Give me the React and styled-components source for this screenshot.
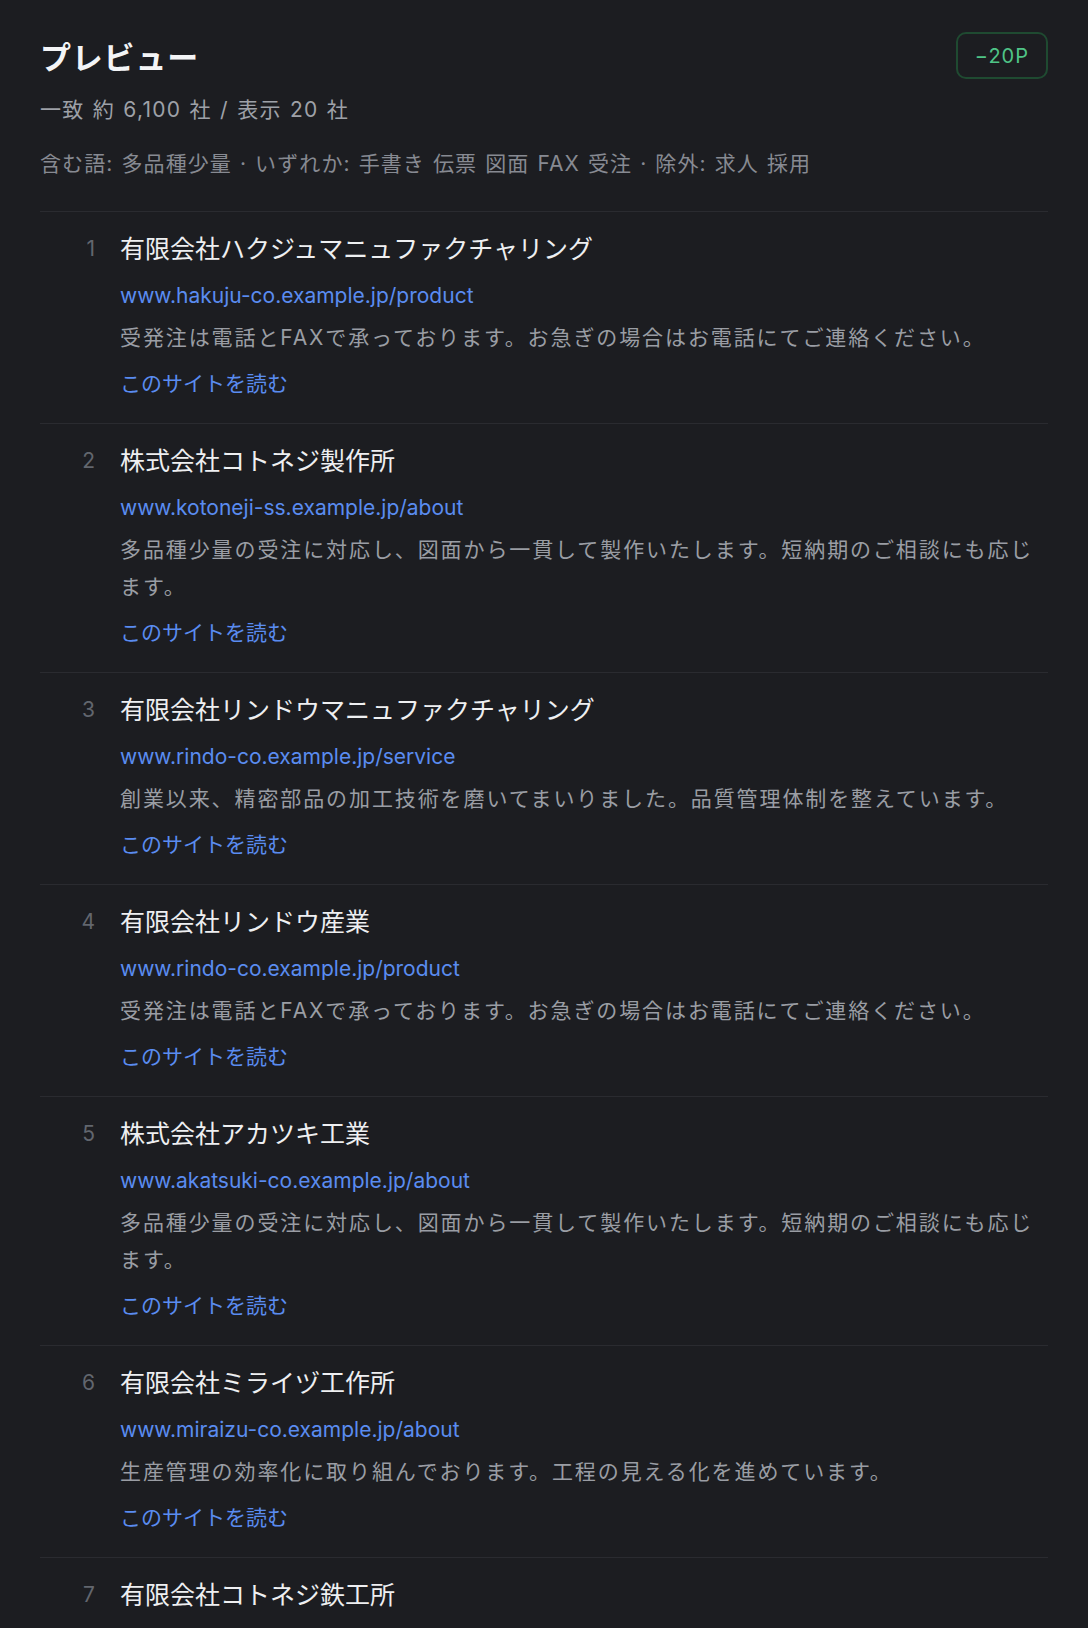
import React from "react"
import styled, { createGlobalStyle } from "styled-components"

const GlobalStyle = createGlobalStyle`
  html, body {
    margin: 0;
    padding: 0;
    background: #1c1d21;
  }
  * {
    box-sizing: border-box;
  }
`

const results = [
    {
        name: "有限会社ハクジュマニュファクチャリング",
        url: "www.hakuju-co.example.jp/product",
        text: "受発注は電話とFAXで承っております。お急ぎの場合はお電話にてご連絡ください。",
    },
    {
        name: "株式会社コトネジ製作所",
        url: "www.kotoneji-ss.example.jp/about",
        text: "多品種少量の受注に対応し、図面から一貫して製作いたします。短納期のご相談にも応じます。",
    },
    {
        name: "有限会社リンドウマニュファクチャリング",
        url: "www.rindo-co.example.jp/service",
        text: "創業以来、精密部品の加工技術を磨いてまいりました。品質管理体制を整えています。",
    },
    {
        name: "有限会社リンドウ産業",
        url: "www.rindo-co.example.jp/product",
        text: "受発注は電話とFAXで承っております。お急ぎの場合はお電話にてご連絡ください。",
    },
    {
        name: "株式会社アカツキ工業",
        url: "www.akatsuki-co.example.jp/about",
        text: "多品種少量の受注に対応し、図面から一貫して製作いたします。短納期のご相談にも応じます。",
    },
    {
        name: "有限会社ミライヅ工作所",
        url: "www.miraizu-co.example.jp/about",
        text: "生産管理の効率化に取り組んでおります。工程の見える化を進めています。",
    },
    {
        name: "有限会社コトネジ鉄工所",
        url: "www.kotoneji-ss.example.jp/product",
        text: "受発注は電話とFAXで承っております。お急ぎの場合はお電話にてご連絡ください。",
    },
]

const App = () => {
    return (
        <Page>
            <GlobalStyle />
            <Header>
                <Heading>プレビュー</Heading>
                <Cost>−20P</Cost>
            </Header>
            <Summary>一致 約 6,100 社 / 表示 20 社</Summary>
            <Filters>含む語: 多品種少量 · いずれか: 手書き 伝票 図面 FAX 受注 · 除外: 求人 採用</Filters>
            <List>
                {results.map((item, i) => (
                    <Row key={i}>
                        <Rank>{i + 1}</Rank>
                        <Body>
                            <Name>{item.name}</Name>
                            <Url>{item.url}</Url>
                            <Snippet>{item.text}</Snippet>
                            <ReadLink href="#">このサイトを読む</ReadLink>
                        </Body>
                    </Row>
                ))}
            </List>
        </Page>
    )
}
export default App

const Page = styled.div`
height: 100vh;
overflow: hidden;
padding: 32px 40px 0 40px;
background: #1c1d21;
font-family: Inter, "Noto Sans CJK JP", sans-serif;
color: #eeeff1;
`
const Header = styled.div`
display: flex;
justify-content: space-between;
align-items: flex-start;
`
const Heading = styled.h1`
margin: 6px 0 0 0;
font-size: 31px;
line-height: 40px;
font-weight: 700;
letter-spacing: 0.8px;
color: #f3f4f6;
`
const Cost = styled.div`
height: 47px;
padding: 0 17px;
display: flex;
align-items: center;
border: 2px solid #1f4a31;
border-radius: 10px;
color: #4fc487;
font-size: 20px;
letter-spacing: 1px;
`
const Summary = styled.div`
margin-top: 16px;
font-size: 21px;
line-height: 30px;
letter-spacing: 1.3px;
word-spacing: 1px;
color: #9ea1a8;
`
const Filters = styled.div`
margin-top: 24px;
font-size: 21px;
line-height: 30px;
letter-spacing: 1.1px;
word-spacing: 1px;
color: #878a92;
`
const List = styled.div`
margin-top: 32px;
display: flex;
flex-direction: column;
`
const Row = styled.div`
display: grid;
grid-template-columns: 80px 1fr;
border-top: 1px solid #2a2b30;
padding: 20px 0 24px 0;
`
const Rank = styled.div`
padding-right: 25px;
text-align: right;
font-size: 21px;
line-height: 34px;
color: #62666e;
`
const Body = styled.div`
display: flex;
flex-direction: column;
align-items: flex-start;
min-width: 0;
`
const Name = styled.div`
font-size: 25px;
line-height: 34px;
color: #eeeff1;
`
const Url = styled.div`
margin-top: 15px;
font-size: 21px;
line-height: 30px;
color: #5a8cf0;
`
const Snippet = styled.div`
margin-top: 8px;
font-size: 21px;
line-height: 37px;
letter-spacing: 1.9px;
color: #9a9da4;
`
const ReadLink = styled.a`
margin-top: 13px;
font-size: 21px;
line-height: 30px;
color: #5a8cf0;
text-decoration: none;
`
